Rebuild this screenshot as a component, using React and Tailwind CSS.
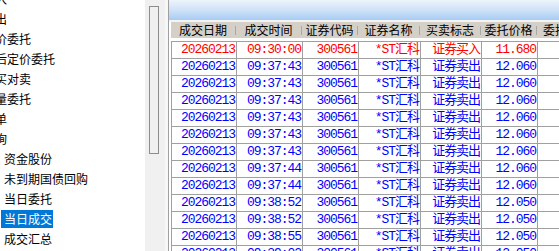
const tree = [
  { text: "买入", level: 1 },
  { text: "卖出", level: 1 },
  { text: "市价委托", level: 1 },
  { text: "盘后定价委托", level: 1 },
  { text: "对买对卖", level: 1 },
  { text: "批量委托", level: 1 },
  { text: "撤单", level: 1 },
  { text: "查询", level: 1 },
  { text: "资金股份", level: 2 },
  { text: "未到期国债回购", level: 2 },
  { text: "当日委托", level: 2 },
  { text: "当日成交", level: 2, selected: true },
  { text: "成交汇总", level: 2 },
];

const headers = [
  { label: "成交日期", w: "w-[65px]" },
  { label: "成交时间", w: "w-[66px]" },
  { label: "证券代码", w: "w-[56px]" },
  { label: "证券名称", w: "w-[62px]" },
  { label: "买卖标志", w: "w-[61px]" },
  { label: "委托价格", w: "w-[56px]" },
  { label: "委托数量", w: "w-[61px]" },
];

const rows = [
  ["09:30:00", "证券买入", "11.680", true],
  ["09:37:43", "证券卖出", "12.060"],
  ["09:37:43", "证券卖出", "12.060"],
  ["09:37:43", "证券卖出", "12.060"],
  ["09:37:43", "证券卖出", "12.060"],
  ["09:37:43", "证券卖出", "12.060"],
  ["09:37:43", "证券卖出", "12.060"],
  ["09:37:44", "证券卖出", "12.060"],
  ["09:37:44", "证券卖出", "12.060"],
  ["09:38:52", "证券卖出", "12.050"],
  ["09:38:52", "证券卖出", "12.050"],
  ["09:38:55", "证券卖出", "12.050"],
  ["09:39:02", "证券卖出", "12.050"],
];

function TreeItem({ item }) {
  return (
    <div className="h-[20px] flex items-start whitespace-nowrap">
      {item.level === 1 ? (
        <span className="-ml-[17px] h-[18px] leading-[18px]">{item.text}</span>
      ) : (
        <span
          className={
            item.selected
              ? "ml-[1px] pl-[3px] pr-[1px] h-[18px] leading-[18px] bg-[#0078d7] text-white"
              : "ml-[4px] h-[18px] leading-[18px]"
          }
        >
          {item.text}
        </span>
      )}
    </div>
  );
}

function Cell({ w, children }) {
  return (
    <div className={`${w} shrink-0 border-r border-[#a0a0a0] text-right pr-[1px] overflow-hidden whitespace-nowrap`}>
      {children}
    </div>
  );
}

export default function App() {
  return (
    <div className="w-[559px] h-[251px] flex overflow-hidden bg-white text-black font-['Noto_Sans_CJK_SC',sans-serif] text-[12px]">
      {/* tree */}
      <div className="w-[145px] shrink-0 overflow-hidden">
        <div className="-mt-[9.7px]">
          {tree.map((item, i) => (
            <TreeItem key={i} item={item} />
          ))}
        </div>
      </div>

      {/* scrollbar */}
      <div className="w-[20px] shrink-0 bg-[#f0f0f0] pl-[4px] pt-[6px]">
        <div className="w-[10px] h-[148px] border border-[#8c8c8c] bg-[#f0f0f0]" />
      </div>

      <div className="w-[3px] shrink-0 bg-[#f7f7f7]" />

      {/* right panel */}
      <div className="flex-1 min-w-0 border-l border-[#a0a0a0] overflow-hidden flex flex-col">
        <div className="h-[20px] shrink-0 bg-linear-to-b from-[#edf4fc] via-[#cfe2f8] to-[#a8ccf3]" />
        <div className="h-[2px] shrink-0 bg-[#f4f4f4]" />
        <div className="pl-[2px] bg-white">
          <div className="h-[16px] flex bg-[#d4d0c8] w-max">
            {headers.map((h) => (
              <div key={h.label} className={`${h.w} shrink-0 flex items-center`}>
                <span className="flex-1 text-center leading-[16px] whitespace-nowrap">{h.label}</span>
                <span className="w-px h-[9px] bg-[#a8a8a8]" />
              </div>
            ))}
          </div>
          <div className="h-[3px]" />
          <div className="border-t border-[#a0a0a0] font-['Liberation_Mono','Noto_Sans_CJK_SC',monospace] text-[13px] tracking-[-1.05px]">
            {rows.map(([time, flag, price, buy], i) => (
              <div
                key={i}
                className={`h-[17px] flex border-b border-l border-[#a0a0a0] leading-[16px] ${
                  buy ? "text-[#ff0000]" : "text-[#0000ff]"
                }`}
              >
                <Cell w="w-[65px]">20260213</Cell>
                <Cell w="w-[66px]">{time}</Cell>
                <Cell w="w-[56px]">300561</Cell>
                <Cell w="w-[62px]">*ST汇科</Cell>
                <Cell w="w-[61px]">{flag}</Cell>
                <Cell w="w-[56px]">{price}</Cell>
                <div className="flex-1" />
              </div>
            ))}
          </div>
        </div>
      </div>
    </div>
  );
}
